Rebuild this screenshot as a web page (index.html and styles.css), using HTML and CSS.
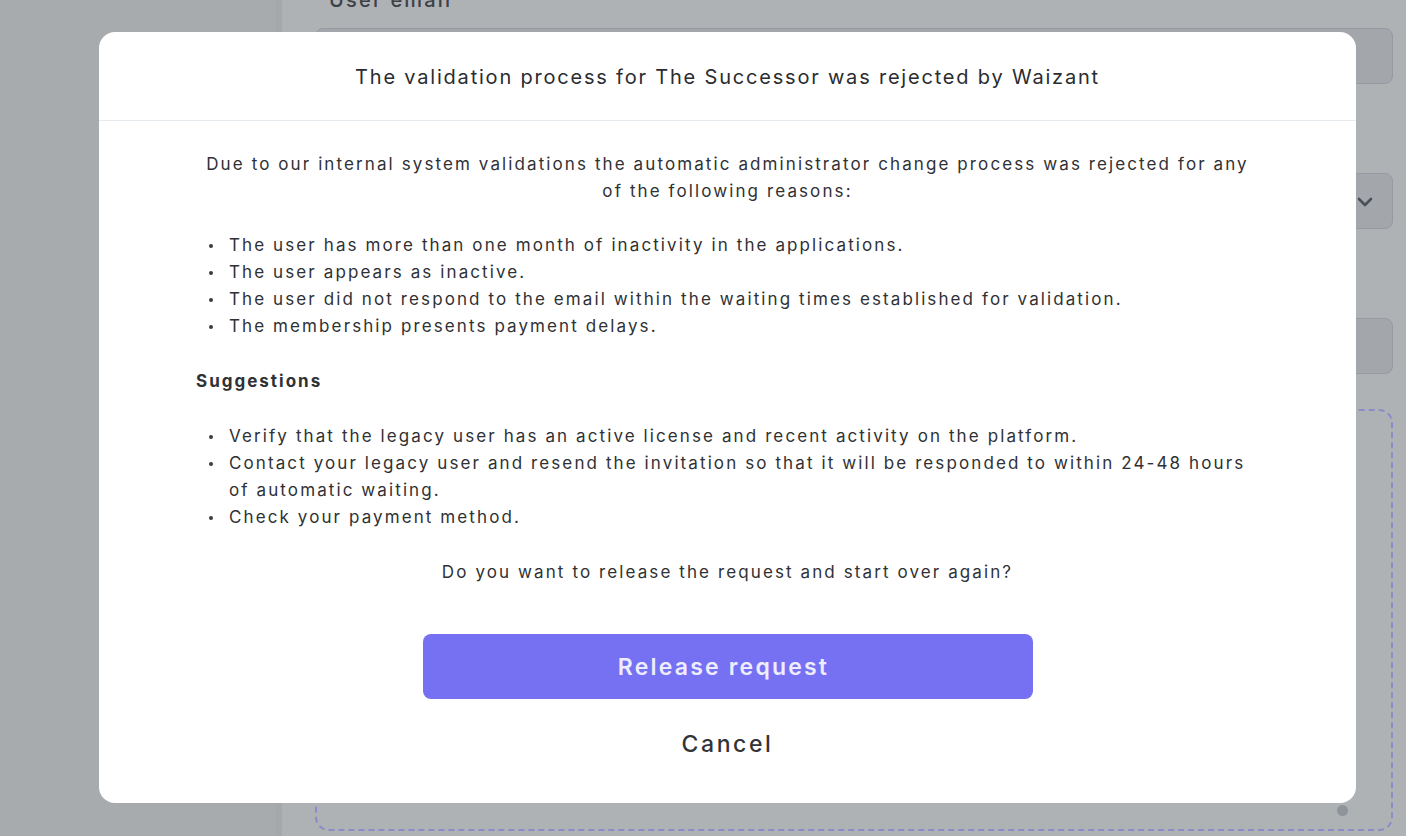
FILE: index.html
```html
<!DOCTYPE html>
<html lang="en">
<head>
<meta charset="utf-8">
<title>Validation rejected</title>
<link rel="stylesheet" href="styles.css">
</head>
<body>
<div class="app">
  <aside class="sidebar"></aside>
  <main class="main">
    <div class="form">
      <div class="field">
        <label class="label">User email</label>
        <div class="input"></div>
      </div>
      <div class="field">
        <label class="label">Role</label>
        <div class="input select">
          <svg class="chevron" width="16" height="10" viewBox="0 0 16 10"><path d="M2 2l6 6 6-6" fill="none" stroke="#4b5058" stroke-width="2.6" stroke-linecap="round" stroke-linejoin="round"/></svg>
        </div>
      </div>
      <div class="field">
        <label class="label">Name</label>
        <div class="input"></div>
      </div>
      <div class="dropzone"><span class="handle"></span></div>
    </div>
  </main>
</div>

<div class="modal" role="dialog">
  <header class="modal-header">
    <h2 class="modal-title">The validation process for The Successor was rejected by Waizant</h2>
  </header>
  <div class="modal-body">
    <p class="intro">Due to our internal system validations the automatic administrator change process was rejected for any<br>of the following reasons:</p>
    <ul class="list">
      <li>The user has more than one month of inactivity in the applications.</li>
      <li>The user appears as inactive.</li>
      <li>The user did not respond to the email within the waiting times established for validation.</li>
      <li>The membership presents payment delays.</li>
    </ul>
    <h3 class="subhead">Suggestions</h3>
    <ul class="list">
      <li>Verify that the legacy user has an active license and recent activity on the platform.</li>
      <li>Contact your legacy user and resend the invitation so that it will be responded to within 24-48 hours<br>of automatic waiting.</li>
      <li>Check your payment method.</li>
    </ul>
    <p class="question">Do you want to release the request and start over again?</p>
    <div class="actions">
      <button class="btn-primary" type="button">Release request</button>
      <button class="btn-link" type="button">Cancel</button>
    </div>
  </div>
</div>
</body>
</html>
```
FILE: styles.css
```css
* { box-sizing: border-box; }
html, body { margin: 0; padding: 0; }
body {
  width: 1406px;
  height: 836px;
  overflow: hidden;
  font-family: Inter, "Noto Sans", sans-serif;
  color: #2f3135;
  background: #afb2b5;
  position: relative;
}
.app {
  display: grid;
  grid-template-columns: 282px 1fr;
  height: 836px;
}
.sidebar {
  background: #a8abae;
  border-right: 6px solid #a5a8ab;
}
.main {
  background: #afb2b5;
  padding: 0 13px 0 33px;
  overflow: hidden;
}
.form {
  margin-top: -12px;
  display: flex;
  flex-direction: column;
}
.field { display: flex; flex-direction: column; }
.field + .field { margin-top: 49px; }
.label {
  font-size: 20px;
  line-height: 24px;
  font-weight: 500;
  letter-spacing: 2.2px;
  color: #3c4047;
  padding-left: 14px;
  height: 40px;
}
.input {
  height: 56px;
  border: 1px solid #979ba1;
  border-radius: 8px;
  background: #a3a6ab;
  position: relative;
}
.chevron { position: absolute; right: 19px; top: 23px; }
.dropzone {
  margin-top: 35px;
  height: 422px;
  border: 2px dashed #8c8ac8;
  border-radius: 14px;
  position: relative;
}
.handle {
  position: absolute;
  left: 1020px;
  top: 394px;
  width: 11px;
  height: 11px;
  border-radius: 50%;
  background: #8e949a;
}

.modal {
  position: absolute;
  left: 99px;
  top: 32px;
  width: 1257px;
  height: 771px;
  background: #fff;
  border-radius: 16px;
  display: flex;
  flex-direction: column;
}
.modal-header {
  height: 89px;
  padding-top: 1px;
  border-bottom: 1px solid #e6ebef;
  display: flex;
  align-items: center;
  justify-content: center;
}
.modal-title {
  margin: 0;
  font-size: 20px;
  font-weight: 400;
  letter-spacing: 1.8px;
  color: #2a2c30;
}
.modal-body {
  padding: 30px 97px 0;
  display: flex;
  flex-direction: column;
  font-size: 17px;
  line-height: 27px;
  letter-spacing: 2.1px;
}
.intro { margin: 0; text-align: center; }
.list {
  list-style: none;
  margin: 27px 0 0;
  padding: 0 0 0 33px;
}
.list li { position: relative; }
.list li::before {
  content: "";
  position: absolute;
  left: -20px;
  top: 12px;
  width: 4px;
  height: 4px;
  border-radius: 50%;
  background: #3a3c40;
}
.subhead {
  margin: 28px 0 0;
  font-size: 17px;
  line-height: 27px;
  font-weight: 700;
  letter-spacing: 2px;
}
.subhead + .list { margin-top: 28px; }
.question { margin: 28px 0 0; text-align: center; }
.actions {
  margin-top: 48px;
  display: flex;
  flex-direction: column;
  align-items: center;
}
.btn-primary {
  width: 610px;
  height: 65px;
  border: 0;
  border-radius: 8px;
  background: #7670f2;
  color: #eeedff;
  font-family: inherit;
  font-size: 23px;
  font-weight: 600;
  letter-spacing: 2.2px;
  padding: 0 8px 0 0;
}
.btn-link {
  margin-top: 30px;
  border: 0;
  background: none;
  padding: 0;
  font-family: inherit;
  font-size: 23px;
  font-weight: 500;
  line-height: 30px;
  letter-spacing: 2.6px;
  color: #323438;
}
```
